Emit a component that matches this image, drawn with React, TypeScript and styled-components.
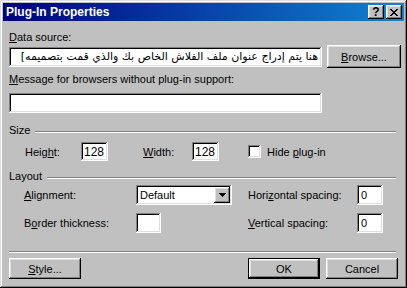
import React from 'react';
import styled, { createGlobalStyle } from 'styled-components';

const GlobalStyle = createGlobalStyle`
  html, body {
    margin: 0;
    padding: 0;
    background: #c0c0c0;
  }
  body {
    font-family: "Liberation Sans", Arial, sans-serif;
    font-size: 11px;
    color: #000;
  }
`;

const raised = `
  box-shadow: inset -1px -1px #000, inset 1px 1px #fff,
    inset -2px -2px #808080, inset 2px 2px #dfdfdf;
`;

const sunken = `
  box-shadow: inset -1px -1px #fff, inset 1px 1px #808080,
    inset -2px -2px #dfdfdf, inset 2px 2px #000;
`;

const Window = styled.div`
  width: 407px;
  height: 288px;
  box-sizing: border-box;
  padding: 3px;
  background: #c0c0c0;
  box-shadow: inset -1px -1px #000, inset 1px 1px #dfdfdf,
    inset -2px -2px #808080, inset 2px 2px #fff;
  display: flex;
  flex-direction: column;
`;

const TitleBar = styled.div`
  height: 18px;
  display: flex;
  align-items: center;
  padding: 0 2px 0 3px;
  background: linear-gradient(to right, #000080, #1084d0);
`;

const TitleText = styled.span`
  flex: 1;
  color: #fff;
  font-weight: bold;
  font-size: 12px;
`;

const CaptionButton = styled.div`
  width: 16px;
  height: 14px;
  background: #c0c0c0;
  ${raised}
  display: flex;
  align-items: center;
  justify-content: center;
  font-weight: bold;
  font-size: 12px;
  line-height: 14px;
  & + & {
    margin-left: 2px;
  }
`;

const Body = styled.div`
  flex: 1;
  display: flex;
  flex-direction: column;
  padding: 0 3px 6px 6px;
`;

const FieldLabel = styled.div<{ $top: number }>`
  margin-top: ${p => p.$top}px;
  height: 13px;
  line-height: 13px;
  white-space: nowrap;
`;

const Key = styled.span`
  text-decoration: underline;
`;

const SourceRow = styled.div`
  margin-top: 1px;
  display: flex;
  align-items: center;
  gap: 5px;
`;

const Field = styled.div<{ $w: number; $h?: number }>`
  width: ${p => p.$w}px;
  height: ${p => p.$h ?? 20}px;
  box-sizing: border-box;
  padding: 2px;
  background: #fff;
  ${sunken}
  flex: none;
`;

const FieldText = styled.div<{ $rtl?: boolean }>`
  height: 100%;
  overflow: hidden;
  white-space: nowrap;
  display: flex;
  align-items: center;
  padding: ${p => (p.$rtl ? '0 2px 0 0' : '0 0 0 2px')};
  direction: ${p => (p.$rtl ? 'rtl' : 'ltr')};
  font-family: ${p => (p.$rtl ? '"DejaVu Sans", sans-serif' : 'inherit')};
`;

const NumberText = styled(FieldText)`
  font-size: 12px;
  padding-left: 1px;
`;

const Button = styled.div<{ $w: number; $h?: number; $default?: boolean }>`
  width: ${p => p.$w}px;
  height: ${p => p.$h ?? 21}px;
  flex: none;
  display: flex;
  align-items: center;
  justify-content: center;
  background: #c0c0c0;
  ${p =>
    p.$default
      ? `box-shadow: inset 0 0 0 1px #000, inset -2px -2px #000, inset 2px 2px #fff,
          inset -3px -3px #808080, inset 3px 3px #dfdfdf;`
      : raised}
`;

const GroupHeader = styled.div<{ $top: number }>`
  margin-top: ${p => p.$top}px;
  margin-right: 5px;
  display: flex;
  align-items: flex-start;
  height: 13px;
  line-height: 13px;
`;

const GroupRule = styled.div`
  flex: 1;
  margin: 7px 0 0 5px;
  height: 0;
  border-top: 1px solid #808080;
  border-bottom: 1px solid #fff;
`;

const SizeRow = styled.div`
  margin: 5px 0 0 16px;
  height: 19px;
  display: grid;
  grid-template-columns: 56px 62px 49px 56px auto;
  align-items: center;
`;

const CheckLabel = styled.label`
  display: flex;
  align-items: center;
  gap: 6px;
`;

const CheckBox = styled.div`
  width: 13px;
  height: 13px;
  box-sizing: border-box;
  background: #fff;
  ${sunken}
`;

const LayoutGrid = styled.div`
  margin: 2px 0 0 15px;
  display: grid;
  grid-template-columns: 112px 112px 109px auto;
  grid-auto-rows: 20px;
  row-gap: 8px;
  align-items: center;
`;

const Select = styled(Field)`
  display: flex;
  align-items: stretch;
`;

const SelectValue = styled.div`
  flex: 1;
  display: flex;
  align-items: center;
  padding-left: 2px;
`;

const SelectArrow = styled.div`
  width: 16px;
  background: #c0c0c0;
  ${raised}
  display: flex;
  align-items: center;
  justify-content: center;
`;

const Footer = styled.div`
  margin-top: auto;
  display: flex;
  flex-direction: column;
`;

const FooterRule = styled.div`
  margin-right: 5px;
  border-top: 1px solid #808080;
  border-bottom: 1px solid #fff;
`;

const ButtonRow = styled.div`
  margin: 5px 3px 0 0;
  display: flex;
  gap: 6px;
`;

const Spacer = styled.div`
  flex: 1;
`;

const CloseGlyph = () => (
  <svg width="8" height="7" viewBox="0 0 8 7" shapeRendering="crispEdges">
    <path
      d="M0 0h2v1H0zM6 0h2v1H6zM1 1h2v1H1zM5 1h2v1H5zM2 2h4v1H2zM3 3h2v1H3zM2 4h4v1H2zM1 5h2v1H1zM5 5h2v1H5zM0 6h2v1H0zM6 6h2v1H6z"
      fill="#000"
    />
  </svg>
);

const DownGlyph = () => (
  <svg width="7" height="4" viewBox="0 0 7 4" shapeRendering="crispEdges">
    <path d="M0 0h7v1H0zM1 1h5v1H1zM2 2h3v1H2zM3 3h1v1H3z" fill="#000" />
  </svg>
);

const ARABIC = 'هنا يتم إدراج عنوان ملف الفلاش الخاص بك والذي قمت بتصميمه]';

const App = () => {
  return (
    <>
      <GlobalStyle />
      <Window>
        <TitleBar>
          <TitleText>Plug-In Properties</TitleText>
          <CaptionButton>?</CaptionButton>
          <CaptionButton>
            <CloseGlyph />
          </CaptionButton>
        </TitleBar>

        <Body>
          <FieldLabel $top={10}>
            <Key>D</Key>ata source:
          </FieldLabel>
          <SourceRow>
            <Field $w={313}>
              <FieldText $rtl>{ARABIC}</FieldText>
            </Field>
            <Button $w={74} $h={23}>
              <span>
                <Key>B</Key>rowse...
              </span>
            </Button>
          </SourceRow>

          <FieldLabel $top={5}>
            <Key>M</Key>essage for browsers without plug-in support:
          </FieldLabel>
          <Field $w={313} style={{ marginTop: 7 }}>
            <FieldText />
          </Field>

          <GroupHeader $top={11}>
            Size
            <GroupRule />
          </GroupHeader>
          <SizeRow>
            <span>
              Heig<Key>h</Key>t:
            </span>
            <Field $w={27} $h={19}>
              <NumberText>128</NumberText>
            </Field>
            <span>
              <Key>W</Key>idth:
            </span>
            <Field $w={27} $h={19}>
              <NumberText>128</NumberText>
            </Field>
            <CheckLabel>
              <CheckBox />
              <span>
                Hide <Key>p</Key>lug-in
              </span>
            </CheckLabel>
          </SizeRow>

          <GroupHeader $top={9}>
            Layout
            <GroupRule />
          </GroupHeader>
          <LayoutGrid>
            <span>
              <Key>A</Key>lignment:
            </span>
            <Select $w={96}>
              <SelectValue>Default</SelectValue>
              <SelectArrow>
                <DownGlyph />
              </SelectArrow>
            </Select>
            <span>
              Hori<Key>z</Key>ontal spacing:
            </span>
            <Field $w={26}>
              <FieldText>0</FieldText>
            </Field>

            <span>
              B<Key>o</Key>rder thickness:
            </span>
            <Field $w={25}>
              <FieldText />
            </Field>
            <span>
              <Key>V</Key>ertical spacing:
            </span>
            <Field $w={26}>
              <FieldText>0</FieldText>
            </Field>
          </LayoutGrid>

          <Footer>
            <FooterRule />
            <ButtonRow>
              <Button $w={72}>
                <span>
                  <Key>S</Key>tyle...
                </span>
              </Button>
              <Spacer />
              <Button $w={72} $default>
                OK
              </Button>
              <Button $w={72}>Cancel</Button>
            </ButtonRow>
          </Footer>
        </Body>
      </Window>
    </>
  );
};

export default App;
